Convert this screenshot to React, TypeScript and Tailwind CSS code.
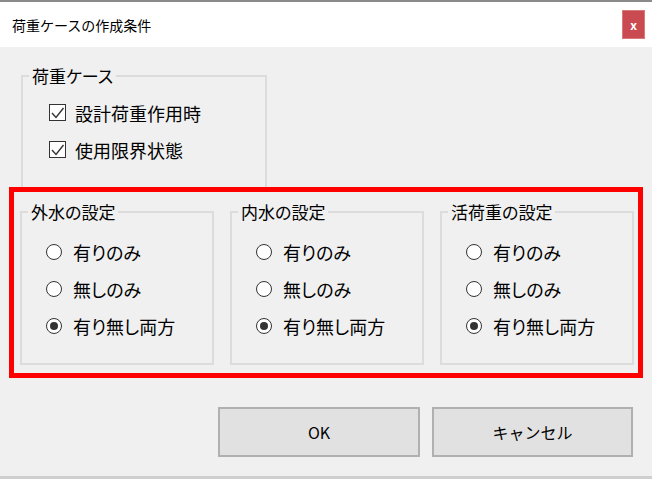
import React from "react";

const Group = ({
  title,
  className,
  children,
}: {
  title: string;
  className?: string;
  children: React.ReactNode;
}) => {
  return (
    <fieldset className={`border-2 border-[#dcdcdc] ${className ?? ""}`}>
      <legend className="ml-[6px] px-[3px] text-[17px] leading-[18px] [font-feature-settings:'palt']">
        {title}
      </legend>
      {children}
    </fieldset>
  );
};

const Check = ({ label }: { label: string }) => (
  <div className="flex h-[37px] items-center gap-[9px]">
    <span className="flex h-[17px] w-[17px] shrink-0 items-center justify-center border border-[#333333] bg-white">
      <svg width="15" height="15" viewBox="0 0 15 15">
        <polyline
          points="2,8 6,12.5 13.5,3"
          fill="none"
          stroke="#333333"
          strokeWidth="1.4"
        />
      </svg>
    </span>
    <span className="text-[18px] leading-none">{label}</span>
  </div>
);

const Radio = ({ label, checked }: { label: string; checked?: boolean }) => (
  <div className="flex h-[37px] items-center gap-[11px]">
    <span className="flex h-[16px] w-[16px] shrink-0 items-center justify-center rounded-full border-[1.5px] border-[#333333] bg-white">
      {checked && <span className="h-[8px] w-[8px] rounded-full bg-[#333333]" />}
    </span>
    <span className="text-[18px] leading-none [font-feature-settings:'palt']">{label}</span>
  </div>
);

const RadioGroup = ({ title }: { title: string }) => (
  <Group title={title} className="h-[162px] w-[194px]">
    <div className="pl-[24px] pt-[12px]">
      <Radio label="有りのみ" />
      <Radio label="無しのみ" />
      <Radio label="有り無し両方" checked />
    </div>
  </Group>
);

export default function App() {
  return (
    <div className="flex h-[479px] w-[652px] flex-col font-['Noto_Sans_CJK_JP',sans-serif] text-black">
      {/* title bar */}
      <div className="h-[2px] bg-[#8a8a8a]" />
      <div className="flex h-[45px] items-center justify-between bg-white pl-[12px] pr-[7px]">
        <span className="text-[14px] leading-none">荷重ケースの作成条件</span>
        <button className="flex h-[29px] w-[23px] items-center justify-center border border-[#d97a7a] bg-[#c94a50] text-[12px] font-bold leading-none text-white">
          x
        </button>
      </div>

      {/* body */}
      <div className="flex flex-1 flex-col bg-[#f0f0f0]">
        <Group title="荷重ケース" className="ml-[21px] mt-[20px] h-[120px] w-[246px] border-b-0">
          <div className="pl-[26px] pt-[9px]">
            <Check label="設計荷重作用時" />
            <Check label="使用限界状態" />
          </div>
        </Group>

        <div className="ml-[9px] flex h-[191px] w-[634px] gap-[16px] border-[5px] border-[#ff0000] pl-[6px] pt-[11px]">
          <RadioGroup title="外水の設定" />
          <RadioGroup title="内水の設定" />
          <RadioGroup title="活荷重の設定" />
        </div>

        <div className="mt-[29px] flex justify-end gap-[12px] pr-[19px]">
          <button className="h-[50px] w-[202px] border-2 border-[#b0b0b0] bg-[#e1e1e1] text-[16px] leading-none">
            OK
          </button>
          <button className="h-[50px] w-[201px] border-2 border-[#b0b0b0] bg-[#e1e1e1] text-[16px] leading-none">
            キャンセル
          </button>
        </div>
      </div>
      <div className="h-[3px] bg-[#cfcfcf]" />
    </div>
  );
}
